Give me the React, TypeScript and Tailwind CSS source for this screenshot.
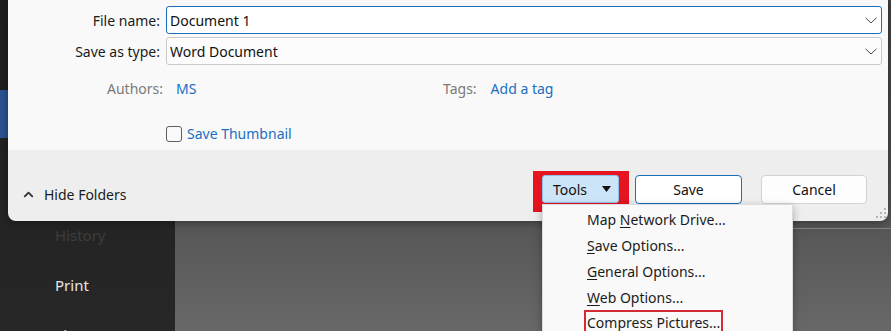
import { ChevronUp } from 'lucide-react';

const font = { fontFamily: '"Noto Sans", "Open Sans", sans-serif' };

const menuItems = [
  { pre: 'Map ', u: 'N', post: 'etwork Drive...' },
  { pre: '', u: 'S', post: 'ave Options...' },
  { pre: '', u: 'G', post: 'eneral Options...' },
  { pre: '', u: 'W', post: 'eb Options...' },
  { pre: '', u: '', post: 'Compress Pictures...', boxed: true },
];

function Gripper() {
  return (
    <svg width="10" height="10" viewBox="0 0 10 10" className="text-[#b5b5b5]">
      <rect x="8" y="0" width="2" height="2" fill="currentColor" />
      <rect x="4" y="4" width="2" height="2" fill="currentColor" />
      <rect x="8" y="4" width="2" height="2" fill="currentColor" />
      <rect x="0" y="8" width="2" height="2" fill="currentColor" />
      <rect x="4" y="8" width="2" height="2" fill="currentColor" />
      <rect x="8" y="8" width="2" height="2" fill="currentColor" />
    </svg>
  );
}

function Chevron() {
  return (
    <svg width="12" height="7" viewBox="0 0 12 7" fill="none">
      <path d="M0.5 0.8L6 6L11.5 0.8" stroke="#4a4a4a" strokeWidth="1" />
    </svg>
  );
}

export default function App() {
  return (
    <div className="relative w-[891px] h-[331px] overflow-hidden flex text-[14px]" style={font}>
      {/* backstage sidebar */}
      <div className="w-[175px] h-full shrink-0 bg-gradient-to-b from-[#1e1e1e] to-[#272727] flex flex-col">
        <div className="shrink-0 mt-[90px] h-[48px] w-[9px] bg-[#2a5391]" />
        <div className="shrink-0 mt-[72px] flex flex-col pl-[55px]">
          <div className="shrink-0 h-[50px] flex items-center text-[#3d3d3d] text-[15px]">History</div>
          <div className="shrink-0 h-[50px] flex items-center text-[#e6e6e6] text-[15px]">Print</div>
          <div className="shrink-0 h-[50px] flex items-center text-[#e6e6e6] text-[15px]">Share</div>
        </div>
      </div>
      <div className="flex-1 h-full bg-gradient-to-b from-[#3f3f3f] via-[#4c4c4c] to-[#686868] flex flex-col">
        <div className="h-[228px] shrink-0" />
        <div className="ml-[500px] border-t border-[#858585]" />
      </div>

      {/* save as dialog */}
      <div className="absolute left-[8px] top-0 w-[880px] h-[221px] rounded-b-[8px] overflow-hidden shadow-[0_2px_8px_rgba(0,0,0,0.35)] flex flex-col">
        <div className="h-[150px] shrink-0 bg-[#f9f9f9] flex flex-col pt-[6px] pr-[6px]">
          <div className="flex items-center gap-[6px]">
            <div className="w-[152px] text-right text-[#1b1b1b]">File name:</div>
            <div className="flex-1 h-[28px] bg-white border border-[#1a6fbf] rounded-[3px] flex items-center pl-[3px] pr-[4px] text-[#111]">
              <span className="flex-1">Document 1</span>
              <Chevron />
            </div>
          </div>
          <div className="flex items-center gap-[6px] mt-[3px]">
            <div className="w-[152px] text-right text-[#1b1b1b]">Save as type:</div>
            <div className="flex-1 h-[28px] bg-[#fcfcfc] border border-[#cacaca] rounded-[3px] flex items-center pl-[3px] pr-[4px] text-[#111]">
              <span className="flex-1">Word Document</span>
              <Chevron />
            </div>
          </div>
          <div className="flex items-center mt-[12px] h-[22px]">
            <div className="w-[155px] text-right text-[#7a7a7a]">Authors:</div>
            <div className="ml-[13px] w-[267px] text-[#1a6fc1]">MS</div>
            <div className="text-[#7a7a7a]">Tags:</div>
            <div className="ml-[14px] text-[#1a6fc1]">Add a tag</div>
          </div>
          <div className="flex items-center mt-[24px] ml-[158px] gap-[5px]">
            <div className="w-[16px] h-[16px] rounded-[3px] border border-[#5f5f5f] bg-[#fafafa]" />
            <span className="text-[#1a6fc1]">Save Thumbnail</span>
          </div>
        </div>
        <div className="flex-1 bg-[#eeeeee] flex items-start pt-[21px] relative">
          <div className="flex items-center mt-[13px] pl-[13px] gap-[8px] text-[#1b1b1b]">
            <ChevronUp size={15} strokeWidth={3} className="text-[#333]" />
            <span>Hide Folders</span>
          </div>
          <div className="flex-1" />
          <div className="bg-[#e5141f] pt-[4px] pl-[9px] pr-[10px] pb-[9px]">
            <div className="w-[77px] h-[28px] bg-[#cce4f7] border border-[#8ec0ec] rounded-[3px] flex items-center pl-[10px] gap-[15px] text-[#111]">
              <span>Tools</span>
              <svg width="9" height="6" viewBox="0 0 9 6"><path d="M0 0h9L4.5 6z" fill="#111" /></svg>
            </div>
          </div>
          <div className="ml-[6px] mt-[4px] w-[107px] h-[29px] bg-white border border-[#1a6fbf] rounded-[4px] flex items-center justify-center text-[#111]">Save</div>
          <div className="ml-[19px] mr-[21px] mt-[4px] w-[106px] h-[29px] bg-[#fdfdfd] border border-[#d3d3d3] rounded-[4px] flex items-center justify-center text-[#111]">Cancel</div>
          <div className="absolute right-[2px] bottom-[3px]">
            <Gripper />
          </div>
        </div>
      </div>

      {/* tools dropdown */}
      <div className="absolute left-[542px] top-[204px] w-[251px] h-[140px] bg-[#f9f9f9] border border-[#dcdcdc] shadow-[0_3px_8px_rgba(0,0,0,0.3)] pt-[1px]">
        {menuItems.map((it) => (
          <div key={it.post} className="h-[26px] flex items-center pl-[44px] text-[#1b1b1b]">
            <span className={it.boxed ? 'border-2 border-[#d42a33] px-[1px] -ml-[3px] leading-[22px]' : ''}>
              {it.pre}
              {it.u && <span className="underline underline-offset-2">{it.u}</span>}
              {it.post}
            </span>
          </div>
        ))}
      </div>
    </div>
  );
}
